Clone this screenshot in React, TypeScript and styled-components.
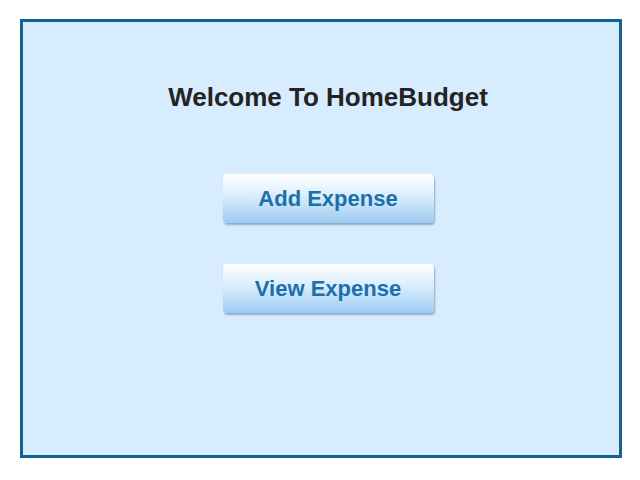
import styled, { createGlobalStyle } from 'styled-components'

const GlobalStyle = createGlobalStyle`
  body {
    margin: 0;
    background: #ffffff;
    font-family: "Liberation Sans", Arial, sans-serif;
  }
`

export const Frame = styled.div`
  box-sizing: border-box;
  margin: 19px 0 0 20px;
  width: 602px;
  height: 439px;
  border: 3px solid #13628f;
  background: #d7ecfe;
  display: flex;
  flex-direction: column;
  align-items: center;
  padding: 59px 0 0 14px;
`

export const Title = styled.h1`
  margin: 0;
  font-size: 26px;
  font-weight: bold;
  color: #232323;
  line-height: 32px;
`

export const Menu = styled.div`
  display: flex;
  flex-direction: column;
  gap: 41px;
  margin-top: 61px;
`

export const MenuButton = styled.button`
  box-sizing: border-box;
  width: 211px;
  height: 49px;
  border: none;
  border-radius: 4px;
  background: linear-gradient(to bottom, #ffffff 0%, #d9edfc 45%, #9ccbf2 100%);
  box-shadow: 1px 2px 2px rgba(60, 90, 120, 0.45);
  color: #1a70aa;
  font-family: "Liberation Sans", Arial, sans-serif;
  font-size: 22px;
  font-weight: bold;
  cursor: pointer;
`

const App = () => {
  return (
    <>
      <GlobalStyle />
      <Frame>
        <Title>Welcome To HomeBudget</Title>
        <Menu>
          <MenuButton>Add Expense</MenuButton>
          <MenuButton>View Expense</MenuButton>
        </Menu>
      </Frame>
    </>
  )
}

export default App
